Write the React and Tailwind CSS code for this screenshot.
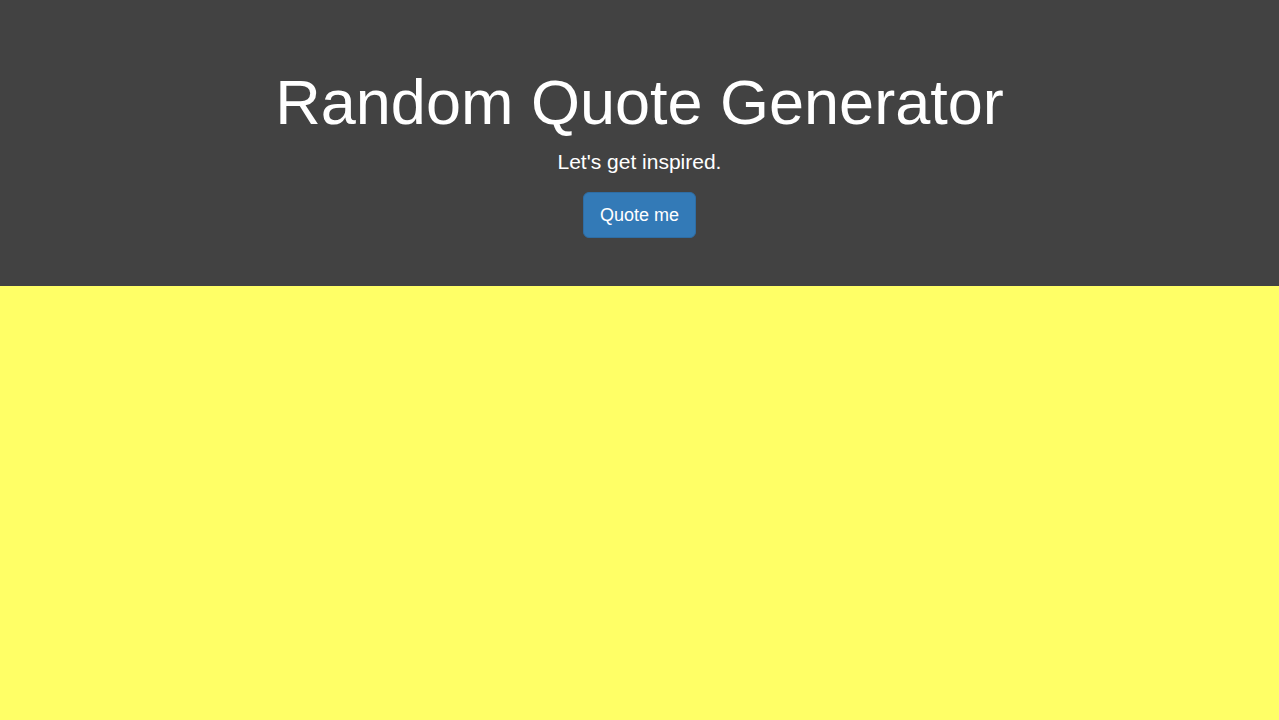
export default function App() {
  return (
    <div className="min-h-screen bg-[#ffff66] font-['Liberation_Sans',Arial,sans-serif]">
      <header className="bg-[#424242] px-4 pt-12 pb-12 text-center">
        <h1 className="mt-5 mb-2.5 text-[63px] font-normal leading-[1.1] text-white">
          Random Quote Generator
        </h1>
        <p className="mb-[15px] text-[21px] leading-[30px] text-white">
          Let's get inspired.
        </p>
        <button
          type="button"
          className="h-[46px] rounded-md border border-[#2e6da4] bg-[#337ab7] px-4 text-[18px] leading-[24px] text-white"
        >
          Quote me
        </button>
      </header>
    </div>
  );
}
